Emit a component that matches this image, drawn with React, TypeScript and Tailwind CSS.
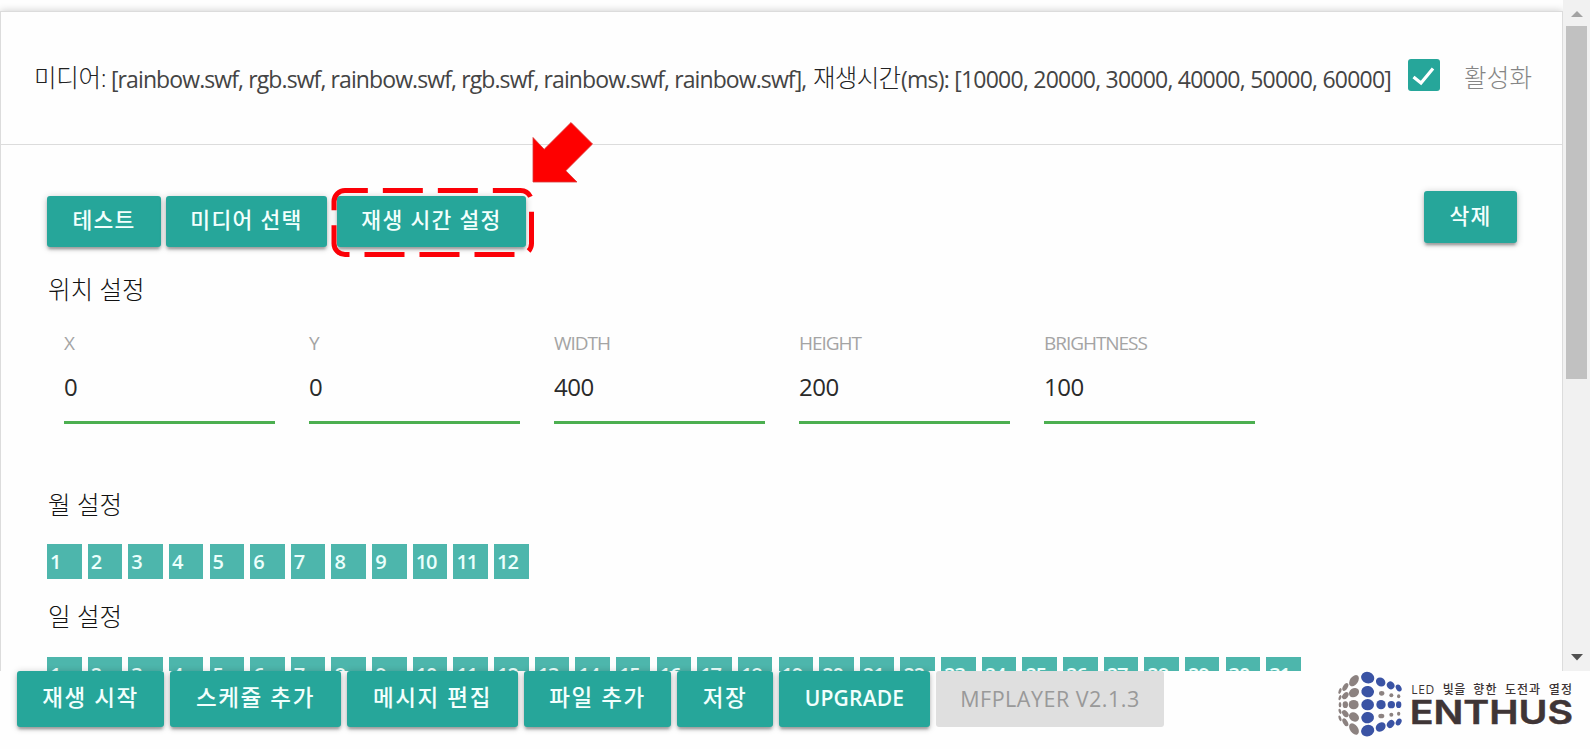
import type { ReactNode } from "react";

const months = Array.from({ length: 12 }, (_, i) => i + 1);
const days = Array.from({ length: 31 }, (_, i) => i + 1);

const fields = [
  { label: "X", value: "0" },
  { label: "Y", value: "0" },
  { label: "WIDTH", value: "400" },
  { label: "HEIGHT", value: "200" },
  { label: "BRIGHTNESS", value: "100" },
];

const BLUE = "#3a53a4";
const GREY = "#8c8280";

// Each dot of the cube: cx, cy, rx, ry, rotation, colour
const dots: [number, number, number, number, number, string][] = [
  [128, 53, 20, 17, 20, BLUE], [128, 95, 19, 17, 10, BLUE], [128, 134, 19, 17, 0, BLUE], [128, 173, 19, 17, -10, BLUE], [128, 212, 20, 17, -20, BLUE],
  [167, 66, 15, 13, 40, BLUE], [170, 100, 8, 7, 0, GREY], [168, 134, 14, 14, 0, BLUE], [169, 168, 9, 7, 0, GREY], [167, 201, 16, 13, -40, BLUE],
  [197, 76, 12, 11, 50, BLUE], [199, 106, 6, 6, 0, GREY], [199, 134, 11, 11, 0, BLUE], [199, 164, 6, 6, 0, GREY], [197, 192, 13, 10, -50, BLUE],
  [221, 84, 11, 8, 60, BLUE], [221, 109, 5, 6, 0, GREY], [221, 134, 8, 10, 0, BLUE], [221, 161, 5, 6, 0, GREY], [221, 186, 11, 8, -60, BLUE],
  [87, 62, 19, 12, -55, GREY], [87, 98, 16, 13, -35, GREY], [86, 134, 15, 14, 0, GREY], [87, 171, 16, 13, 35, GREY], [87, 207, 19, 12, 55, GREY],
  [61, 81, 13, 7, -60, GREY], [61, 107, 12, 8, -50, GREY], [61, 134, 8, 10, 0, GREY], [61, 161, 12, 8, 50, GREY], [61, 187, 13, 7, 60, GREY],
  [45, 93, 9, 4, -70, GREY], [45, 113, 8, 4, -70, GREY], [45, 134, 4, 8, 0, GREY], [45, 154, 8, 4, 70, GREY], [45, 175, 9, 4, 70, GREY],
];

const slogan = [
  { word: "LED", x: 259, width: 69 },
  { word: "빛을", x: 353, width: 68 },
  { word: "향한", x: 445, width: 70 },
  { word: "도전과", x: 540, width: 105 },
  { word: "열정", x: 671, width: 70 },
];

const shadow = "shadow-[0_3px_3px_0_rgba(0,0,0,0.16),0_4px_2px_-2px_rgba(0,0,0,0.14),0_1px_7px_0_rgba(0,0,0,0.22)]";

function Button({ size, children }: { size: string; children: ReactNode }) {
  return (
    <button className={`flex shrink-0 items-center justify-center rounded-[3px] bg-[#26a69a] pb-[2px] font-medium whitespace-nowrap text-[#f2fffd] ${shadow} ${size}`}>
      {children}
    </button>
  );
}

function Title({ children }: { children: ReactNode }) {
  return <h2 className="h-8 pt-px pl-[1px] text-[24.5px] leading-8 font-light text-[#111]">{children}</h2>;
}

function Squares({ values }: { values: number[] }) {
  return (
    <div className="flex gap-[6.15px]">
      {values.map((v) => (
        <div key={v} className="h-[35px] w-[34.5px] shrink-0 bg-[#4db6ac] pl-[3px] text-[20px] leading-[36px] font-semibold tracking-[-1.1px] text-[#ecfffc]">
          {v}
        </div>
      ))}
    </div>
  );
}

function Logo() {
  return (
    <svg className="absolute top-0 left-[1325px] h-[78px] w-[265px]" viewBox="0 33 795 234">
      {dots.map(([x, y, rx, ry, a, fill], i) => (
        <ellipse key={i} cx={x} cy={y} rx={rx} ry={ry} fill={fill} transform={`rotate(${a} ${x} ${y})`} />
      ))}
      {slogan.map((s) => (
        <text key={s.word} x={s.x} y="101" textLength={s.width} fontSize="36" fill="#3c3435" fontWeight="500" letterSpacing="0">{s.word}</text>
      ))}
      <text x="254" y="191" textLength="490" lengthAdjust="spacingAndGlyphs" fontSize="98" fontWeight="600" letterSpacing="0" fill="#3f3536" stroke="#3f3536" strokeWidth="1.5" className="font-['Inter']">ENTHUS</text>
    </svg>
  );
}

export default function App() {
  return (
    <div className="relative flex h-[749px] w-[1590px] flex-col overflow-hidden bg-[#fefefe] font-['Open_Sans','Noto_Sans_CJK_KR',sans-serif]">
      <div className="flex h-[671px] overflow-hidden">
        <main className="flex w-[1563px] flex-col pt-[11px]">
          <section className="flex h-[700px] shrink-0 flex-col border border-[#dcdcdc] shadow-[0_0_8px_rgba(0,0,0,0.2)]">
            <header className="flex h-[133px] shrink-0 border-b border-[#dcdcdc] pl-[33px]">
              <p className="flex w-[1374px] shrink-0 pt-[51px] text-[23px] leading-8 whitespace-nowrap text-[#444]">
                <span className="-mt-px w-[77px] text-[24.5px] font-light tracking-[-0.3px] text-[#222]">미디어:</span>
                <span className="w-[702px] tracking-[-0.9px]">[rainbow.swf, rgb.swf, rainbow.swf, rgb.swf, rainbow.swf, rainbow.swf],</span>
                <span className="-mt-px w-[88px] text-[24.5px] font-light tracking-[-0.7px] text-[#222]">재생시간</span>
                <span className="tracking-[-0.77px]">(ms): [10000, 20000, 30000, 40000, 50000, 60000]</span>
              </p>
              <svg className="mt-[47px] h-8 w-8 shrink-0" viewBox="0 0 32 32">
                <rect width="32" height="32" rx="3" fill="#26a69a" />
                <path d="M5.5 18l7.5 6L25 9.5" fill="none" stroke="#fff" strokeWidth="3.2" />
              </svg>
              <span className="pt-[50px] pl-[24px] text-[24.5px] leading-8 font-light tracking-[0.2px] whitespace-nowrap text-[#858585]">활성화</span>
            </header>
            <div className="flex flex-col pl-[46px]">
              <div className="flex h-[128px] shrink-0 pt-[51px] text-[21.5px] tracking-[1.3px]">
                <Button size="h-[51px] w-[114px]">테스트</Button>
                <Button size="ml-[5px] h-[51px] w-[161px]">미디어 선택</Button>
                <Button size="ml-[10px] h-[51px] w-[189px]">재생 시간 설정</Button>
                <Button size="-mt-[5px] ml-[898px] h-[52px] w-[93px]">삭제</Button>
              </div>
              <Title>위치 설정</Title>
              <div className="mt-[20px] flex gap-[34px] pl-[17px]">
                {fields.map((f) => (
                  <label key={f.label} className="flex h-[99px] w-[211px] flex-col border-b-[3px] border-[#4caf50]">
                    <span className="mt-[4px] h-7 text-[19px] leading-7 tracking-[-1.05px] text-[#a4a4a4]">{f.label}</span>
                    <span className="mt-[14px] h-8 text-[24px] leading-8 tracking-[-0.5px] text-[#2a2a2a]">{f.value}</span>
                  </label>
                ))}
              </div>
              <div className="mt-[64px]"><Title>월 설정</Title></div>
              <div className="mt-[24px]"><Squares values={months} /></div>
              <div className="mt-[21px]"><Title>일 설정</Title></div>
              <div className="mt-[25px]"><Squares values={days} /></div>
            </div>
          </section>
        </main>
        <aside className="relative flex w-[27px] flex-col items-center bg-[#f1f1f1] pt-[11px]">
          <svg className="h-[15px] w-[12px]" viewBox="0 0 12 15"><path d="M0 6L6 0l6 6z" fill="#a3a3a3" /></svg>
          <div className="h-[353px] w-[21px] bg-[#c1c1c1]" />
          <svg className="mt-[275px] h-[7px] w-[12px]" viewBox="0 0 12 7"><path d="M0 0h12L6 6.5z" fill="#505050" /></svg>
        </aside>
      </div>

      <footer className="relative z-10 flex h-[78px] gap-[6px] pl-[17px] text-[22.5px] tracking-[1.6px]">
        <Button size="h-[56px] w-[147px]">재생 시작</Button>
        <Button size="h-[56px] w-[171px]">스케쥴 추가</Button>
        <Button size="h-[56px] w-[171px]">메시지 편집</Button>
        <Button size="h-[56px] w-[147px]">파일 추가</Button>
        <Button size="h-[56px] w-[96px]">저장</Button>
        <Button size="h-[56px] w-[151px] pt-[2px] text-[21px] font-semibold tracking-[0.2px]">UPGRADE</Button>
        <div className="flex h-[56px] w-[228px] items-center justify-center rounded-[3px] bg-[#dfdfdf] text-[21.5px] font-medium tracking-[0.5px] whitespace-nowrap text-[#999]">MFPLAYER V2.1.3</div>
        <Logo />
      </footer>

      <svg className="absolute top-[110px] left-[320px] z-20 h-[160px] w-[290px]" viewBox="320 110 290 160">
        <path d="M334 201.5a11 11 0 0 1 11-11h175.5a11 11 0 0 1 11 11v42a11 11 0 0 1-11 11H345a11 11 0 0 1-11-11z" fill="none" stroke="#fb0007" strokeWidth="5" strokeDasharray="40 15" />
        <path d="M571 122.5L592.5 144 565.8 170.7 577 182H533v-44.5L544.2 149.3z" fill="#fe0000" stroke="#d83a3a" strokeWidth="0.8" />
      </svg>
    </div>
  );
}
